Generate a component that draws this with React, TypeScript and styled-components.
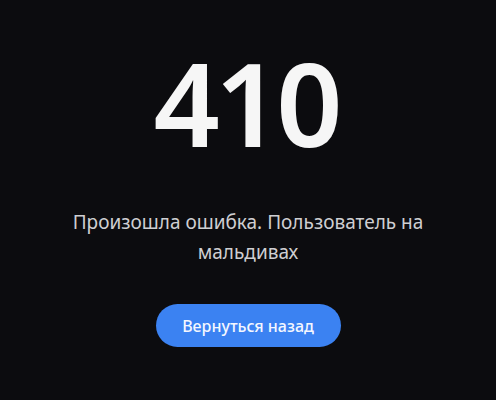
import React from "react";
import styled, { createGlobalStyle } from "styled-components";

const Global = createGlobalStyle`
  html, body { margin: 0; padding: 0; background: #0c0c0f; }
  body { font-family: "Noto Sans", "Open Sans", sans-serif; }
`;

const Page = styled.main`
  width: 496px;
  height: 400px;
  box-sizing: border-box;
  display: flex;
  flex-direction: column;
  align-items: center;
  padding-top: 42px;
  background: #0c0c0f;
`;

const Code = styled.h1`
  margin: 0;
  padding-right: 5px;
  font-family: "Noto Sans", "Open Sans", sans-serif;
  font-size: 116px;
  line-height: 120px;
  font-weight: 600;
  color: #f6f6f6;
  letter-spacing: -5px;
`;

const Message = styled.p`
  margin: 45px 0 0;
  max-width: 380px;
  text-align: center;
  font-size: 19px;
  line-height: 30px;
  color: #cfcfd2;
`;

const BackButton = styled.button`
  margin-top: 37px;
  width: 185px;
  height: 43px;
  border: none;
  border-radius: 22px;
  background: #3b82f2;
  color: #f4f7ff;
  font-family: inherit;
  font-size: 16px;
  font-weight: 500;
  cursor: pointer;
`;

export default function App() {
  return (
    <>
      <Global />
      <Page>
        <Code>410</Code>
        <Message>Произошла ошибка. Пользователь на мальдивах</Message>
        <BackButton>Вернуться назад</BackButton>
      </Page>
    </>
  );
}
